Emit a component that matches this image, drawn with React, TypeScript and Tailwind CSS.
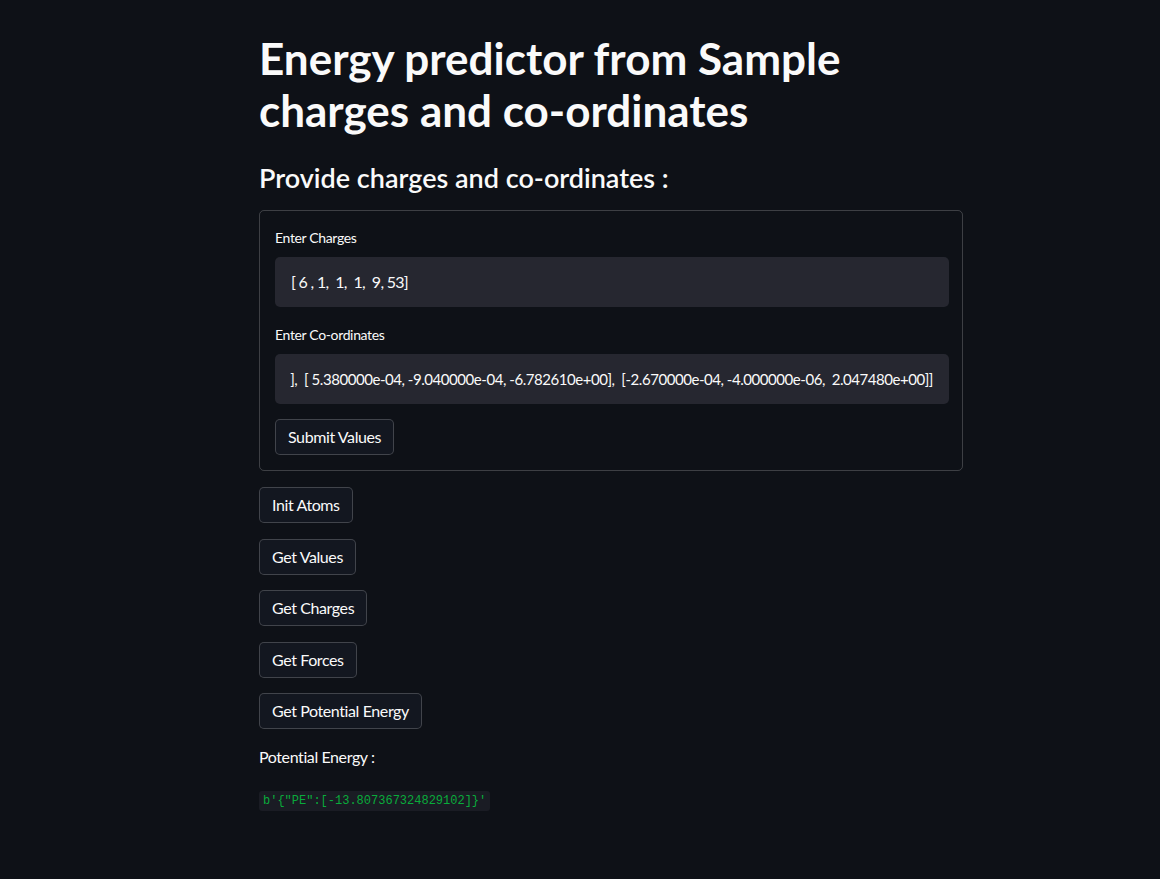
import React from 'react';

const font = { fontFamily: 'Lato, "Noto Sans", sans-serif' };

const actions = ['Init Atoms', 'Get Values', 'Get Charges', 'Get Forces', 'Get Potential Energy'];

const StButton: React.FC<{ label: string }> = ({ label }) => (
  <button className="h-9 self-start rounded-[5px] border border-[#fafafa33] bg-[#131720] px-3 text-base tracking-[-0.4px] text-[#fafafa]">
    {label}
  </button>
);

const App: React.FC = () => {
  return (
    <div className="min-h-[879px] w-full bg-[#0e1117] text-[#fafafa]" style={font}>
      <div className="ml-[259px] w-[704px] pt-[32px]">
        <h1 className="text-[44px] font-bold leading-[52px]">
          Energy predictor from Sample charges and co-ordinates
        </h1>

        <h3 className="mt-[25px] text-[27px] font-semibold leading-[34px]">Provide charges and co-ordinates :</h3>

        {/* form */}
        <div className="mt-[15px] rounded-[5px] border border-[#fafafa33] pb-[15px] pl-[15px] pr-[13px] pt-[17px]">
          <div className="mb-[18px]">
            <div className="mb-[9px] h-5 text-sm leading-5 tracking-[-0.35px]">Enter Charges</div>
            <div className="flex h-[50px] items-center rounded-[5px] bg-[#262730] px-4">
              <span className="whitespace-pre text-base tracking-[-0.7px]">[ 6 , 1,  1,  1,  9, 53]</span>
            </div>
          </div>
          <div>
            <div className="mb-[9px] h-5 text-sm leading-5 tracking-[-0.35px]">Enter Co-ordinates</div>
            <div className="flex h-[50px] items-center justify-end overflow-hidden rounded-[5px] bg-[#262730] px-4">
              <span className="whitespace-pre text-[15px] tracking-[-0.45px]">
                ],  [ 5.380000e-04, -9.040000e-04, -6.782610e+00],  [-2.670000e-04, -4.000000e-06,  2.047480e+00]]
              </span>
            </div>
          </div>
          <div className="mt-[15px] flex">
            <StButton label="Submit Values" />
          </div>
        </div>

        <div className="mt-4 flex flex-col gap-[15.5px]">
          {actions.map((a) => (
            <StButton key={a} label={a} />
          ))}
        </div>

        <p className="mt-4 text-base leading-6 tracking-[-0.4px]">Potential Energy :</p>

        <div className="mt-[22px] flex">
          <code
            className="h-5 rounded-[3px] bg-[#1a1c24] px-1 text-xs leading-5 text-[#09ab3b]"
            style={{ fontFamily: '"Liberation Mono", "DejaVu Sans Mono", monospace' }}
          >
            b'{'{'}"PE":[-13.807367324829102]{'}'}'
          </code>
        </div>
      </div>
    </div>
  );
};

export default App;
